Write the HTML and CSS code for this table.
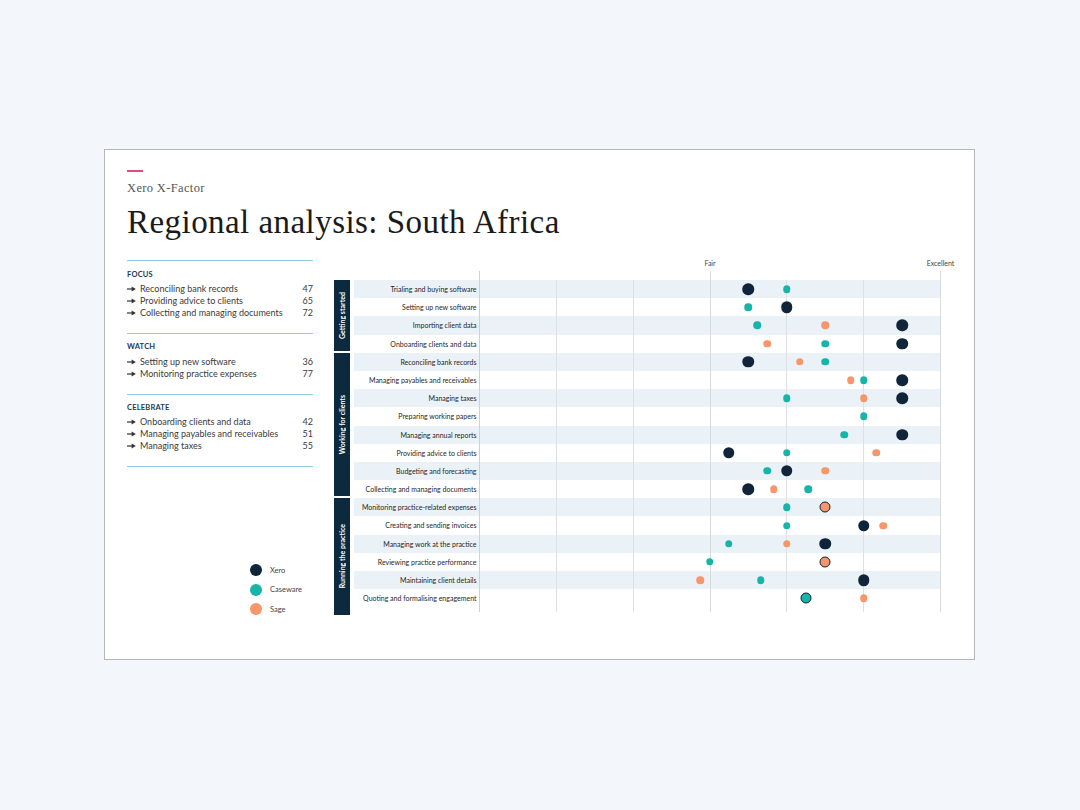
FILE: index.html
```html
<!DOCTYPE html>
<html lang="en">
<head>
<meta charset="utf-8">
<title>Regional analysis: South Africa</title>
<link rel="stylesheet" href="styles.css">
</head>
<body>
<main class="card">
  <div class="dash"></div>
  <div class="eyebrow">Xero X-Factor</div>
  <h1 class="title">Regional analysis: South Africa</h1>

  <div class="content">
    <aside class="side">
      <section class="block">
        <h2 class="block-head">FOCUS</h2>
        <ul class="items">
          <li><svg class="arr" viewBox="0 0 9 6"><path d="M0 3H5.5"/><polygon points="4.6,0.4 8.8,3 4.6,5.6"/></svg><span class="name">Reconciling bank records</span><span class="num">47</span></li>
          <li><svg class="arr" viewBox="0 0 9 6"><path d="M0 3H5.5"/><polygon points="4.6,0.4 8.8,3 4.6,5.6"/></svg><span class="name">Providing advice to clients</span><span class="num">65</span></li>
          <li><svg class="arr" viewBox="0 0 9 6"><path d="M0 3H5.5"/><polygon points="4.6,0.4 8.8,3 4.6,5.6"/></svg><span class="name">Collecting and managing documents</span><span class="num">72</span></li>
        </ul>
      </section>
      <section class="block">
        <h2 class="block-head">WATCH</h2>
        <ul class="items">
          <li><svg class="arr" viewBox="0 0 9 6"><path d="M0 3H5.5"/><polygon points="4.6,0.4 8.8,3 4.6,5.6"/></svg><span class="name">Setting up new software</span><span class="num">36</span></li>
          <li><svg class="arr" viewBox="0 0 9 6"><path d="M0 3H5.5"/><polygon points="4.6,0.4 8.8,3 4.6,5.6"/></svg><span class="name">Monitoring practice expenses</span><span class="num">77</span></li>
        </ul>
      </section>
      <section class="block last">
        <h2 class="block-head">CELEBRATE</h2>
        <ul class="items">
          <li><svg class="arr" viewBox="0 0 9 6"><path d="M0 3H5.5"/><polygon points="4.6,0.4 8.8,3 4.6,5.6"/></svg><span class="name">Onboarding clients and data</span><span class="num">42</span></li>
          <li><svg class="arr" viewBox="0 0 9 6"><path d="M0 3H5.5"/><polygon points="4.6,0.4 8.8,3 4.6,5.6"/></svg><span class="name">Managing payables and receivables</span><span class="num">51</span></li>
          <li><svg class="arr" viewBox="0 0 9 6"><path d="M0 3H5.5"/><polygon points="4.6,0.4 8.8,3 4.6,5.6"/></svg><span class="name">Managing taxes</span><span class="num">55</span></li>
        </ul>
      </section>

      <ul class="legend">
        <li><span class="ldot xero"></span>Xero</li>
        <li><span class="ldot cw"></span>Caseware</li>
        <li><span class="ldot sage"></span>Sage</li>
      </ul>
    </aside>

    <section class="chart">
      <div class="axis">
        <span class="axis-label" style="left:50%">Fair</span>
        <span class="axis-label" style="left:100%">Excellent</span>
      </div>
      <div class="chart-body">
        <div class="groups">
          <div class="group g4"><span>Getting started</span></div>
          <div class="group g8"><span>Working for clients</span></div>
          <div class="group g6"><span>Running the practice</span></div>
        </div>
        <div class="rows">
          <div class="grid">
            <i class="gl tall axis0" style="left:0%"></i>
            <i class="gl" style="left:16.667%"></i>
            <i class="gl" style="left:33.333%"></i>
            <i class="gl tall" style="left:50%"></i>
            <i class="gl" style="left:66.667%"></i>
            <i class="gl" style="left:83.333%"></i>
            <i class="gl tall" style="left:100%"></i>
          </div>

          <div class="row"><div class="label">Trialing and buying software</div><div class="track">
            <i class="dot xero" style="left:58.25%"></i><i class="dot cw" style="left:66.67%"></i></div></div>
          <div class="row"><div class="label">Setting up new software</div><div class="track">
            <i class="dot cw" style="left:58.3%"></i><i class="dot xero" style="left:66.67%"></i></div></div>
          <div class="row"><div class="label">Importing client data</div><div class="track">
            <i class="dot cw" style="left:60.3%"></i><i class="dot sage" style="left:75%"></i><i class="dot xero" style="left:91.67%"></i></div></div>
          <div class="row"><div class="label">Onboarding clients and data</div><div class="track">
            <i class="dot sage" style="left:62.45%"></i><i class="dot cw" style="left:75%"></i><i class="dot xero" style="left:91.67%"></i></div></div>

          <div class="row"><div class="label">Reconciling bank records</div><div class="track">
            <i class="dot xero" style="left:58.25%"></i><i class="dot sage" style="left:69.45%"></i><i class="dot cw" style="left:75%"></i></div></div>
          <div class="row"><div class="label">Managing payables and receivables</div><div class="track">
            <i class="dot sage" style="left:80.5%"></i><i class="dot cw" style="left:83.33%"></i><i class="dot xero" style="left:91.67%"></i></div></div>
          <div class="row"><div class="label">Managing taxes</div><div class="track">
            <i class="dot cw" style="left:66.67%"></i><i class="dot sage" style="left:83.33%"></i><i class="dot xero" style="left:91.67%"></i></div></div>
          <div class="row"><div class="label">Preparing working papers</div><div class="track">
            <i class="dot cw" style="left:83.33%"></i></div></div>
          <div class="row"><div class="label">Managing annual reports</div><div class="track">
            <i class="dot cw" style="left:79.15%"></i><i class="dot xero" style="left:91.67%"></i></div></div>
          <div class="row"><div class="label">Providing advice to clients</div><div class="track">
            <i class="dot xero" style="left:54.1%"></i><i class="dot cw" style="left:66.67%"></i><i class="dot sage" style="left:86.1%"></i></div></div>
          <div class="row"><div class="label">Budgeting and forecasting</div><div class="track">
            <i class="dot cw" style="left:62.45%"></i><i class="dot xero" style="left:66.67%"></i><i class="dot sage" style="left:75%"></i></div></div>
          <div class="row"><div class="label">Collecting and managing documents</div><div class="track">
            <i class="dot xero" style="left:58.25%"></i><i class="dot sage" style="left:63.85%"></i><i class="dot cw" style="left:71.3%"></i></div></div>

          <div class="row"><div class="label">Monitoring practice-related expenses</div><div class="track">
            <i class="dot cw" style="left:66.67%"></i><i class="dot sage ring" style="left:75%"></i></div></div>
          <div class="row"><div class="label">Creating and sending invoices</div><div class="track">
            <i class="dot cw" style="left:66.67%"></i><i class="dot xero" style="left:83.33%"></i><i class="dot sage" style="left:87.55%"></i></div></div>
          <div class="row"><div class="label">Managing work at the practice</div><div class="track">
            <i class="dot cw" style="left:54.1%"></i><i class="dot sage" style="left:66.67%"></i><i class="dot xero" style="left:75%"></i></div></div>
          <div class="row"><div class="label">Reviewing practice performance</div><div class="track">
            <i class="dot cw" style="left:49.95%"></i><i class="dot sage ring" style="left:75%"></i></div></div>
          <div class="row"><div class="label">Maintaining client details</div><div class="track">
            <i class="dot sage" style="left:47.85%"></i><i class="dot cw" style="left:61.05%"></i><i class="dot xero" style="left:83.33%"></i></div></div>
          <div class="row"><div class="label">Quoting and formalising engagement</div><div class="track">
            <i class="dot cw ring" style="left:70.75%"></i><i class="dot sage" style="left:83.33%"></i></div></div>
        </div>
      </div>
    </section>
  </div>
</main>
</body>
</html>
```

FILE: styles.css
```css
* { box-sizing: border-box; }

html, body {
  margin: 0;
  padding: 0;
  background: #f3f6fa;
}

body {
  padding-top: 149px;
  font-family: Lato, "Liberation Sans", Arial, sans-serif;
  color: #333;
}

.card {
  width: 871px;
  height: 511px;
  margin: 0 0 0 104px;
  background: #fff;
  border: 1px solid #b3b7bb;
  padding: 20px 0 0 22px;
}

.dash {
  width: 16px;
  height: 2px;
  background: #dc4f78;
}

.eyebrow {
  margin-top: 9px;
  font-family: "Liberation Serif", "Times New Roman", serif;
  font-size: 12.5px;
  line-height: 15px;
  letter-spacing: 0.35px;
  color: #555;
}

.title {
  margin: 6px 0 0 0;
  font-family: "Liberation Serif", "Times New Roman", serif;
  font-weight: 400;
  font-size: 33px;
  line-height: 40px;
  color: #1a1a1a;
  letter-spacing: 0.45px;
}

.content {
  display: flex;
  margin-top: 13px;
}

/* ---------- Left side ---------- */
.side {
  width: 186px;
  flex: none;
  display: flex;
  flex-direction: column;
  margin-top: 5px;
}

.block {
  border-top: 1px solid #93cadb;
  padding: 8.5px 0 14px 0;
}

.block.last {
  border-bottom: 1px solid #93cadb;
}

.block-head {
  margin: 0;
  font-size: 7.5px;
  line-height: 10px;
  font-weight: 700;
  color: #1c3957;
  letter-spacing: 0.2px;
}

.items {
  list-style: none;
  margin: 3.3px 0 0 0;
  padding: 0;
}

.items li {
  display: flex;
  align-items: center;
  height: 12px;
  font-size: 9px;
  line-height: 12px;
  color: #3a3a3a;
}

.arr {
  width: 9px;
  height: 6px;
  flex: none;
  margin-right: 4px;
}

.arr path {
  stroke: #333;
  stroke-width: 1.2;
  fill: none;
}

.arr polygon {
  fill: #333;
}

.name {
  flex: 1;
}

.num {
  text-align: right;
}

.legend {
  list-style: none;
  margin: 93px 0 0 123px;
  padding: 0;
}

.legend li {
  display: flex;
  align-items: center;
  height: 19.6px;
  font-size: 7.5px;
  color: #444;
}

.ldot {
  width: 12px;
  height: 12px;
  border-radius: 50%;
  margin-right: 8px;
  flex: none;
}

/* ---------- Chart ---------- */
.chart {
  margin-left: 21px;
  width: 607px;
  flex: none;
}

.axis {
  position: relative;
  height: 25px;
  margin-left: 145.5px;
  width: 461px;
}

.axis-label {
  position: absolute;
  top: 4px;
  transform: translateX(-50%);
  font-size: 7px;
  line-height: 9px;
  color: #444;
  white-space: nowrap;
}

.chart-body {
  display: flex;
  align-items: flex-start;
}

.groups {
  width: 16px;
  flex: none;
  margin-right: 4px;
  display: flex;
  flex-direction: column;
}

.group {
  background: #0c2a3e;
  color: #fff;
  display: flex;
  align-items: center;
  justify-content: center;
  margin-bottom: 2px;
}

.group span {
  writing-mode: vertical-rl;
  transform: rotate(180deg);
  font-size: 7px;
  font-weight: 700;
  white-space: nowrap;
}

.g4 { height: 70.8px; }
.g8 { height: 143.6px; }
.g6 { height: 116.2px; margin-bottom: 0; }

.rows {
  position: relative;
  width: 586.5px;
  flex: none;
}

.grid {
  position: absolute;
  left: 125.5px;
  width: 461px;
  top: 0;
  bottom: -5px;
  z-index: 1;
}

.gl {
  position: absolute;
  top: 0;
  bottom: 0;
  width: 1px;
  margin-left: -0.5px;
  background: #dde1e5;
}

.gl.tall {
  top: -9px;
  background: #d6dade;
}

.gl.axis0 {
  background: #cdd2d7;
}

.row {
  display: flex;
  height: 18.2px;
}

.row:nth-child(even) {
  background: #eaf1f7;
}

.label {
  width: 125.5px;
  flex: none;
  text-align: right;
  padding-right: 3px;
  font-size: 7px;
  line-height: 18.2px;
  color: #1f1f1f;
  white-space: nowrap;
}

.track {
  position: relative;
  width: 461px;
  flex: none;
}

.dot {
  position: absolute;
  top: 50%;
  z-index: 2;
  border-radius: 50%;
  transform: translate(-50%, -50%);
  width: 7.5px;
  height: 7.5px;
}

.dot.xero {
  width: 11.5px;
  height: 11.5px;
  z-index: 3;
}

.dot.ring {
  width: 11px;
  height: 11px;
  border: 1.5px solid #0f2338;
  z-index: 3;
}

.xero { background: #10243a; }
.cw { background: #17b5a8; }
.sage { background: #f5966b; }
```
